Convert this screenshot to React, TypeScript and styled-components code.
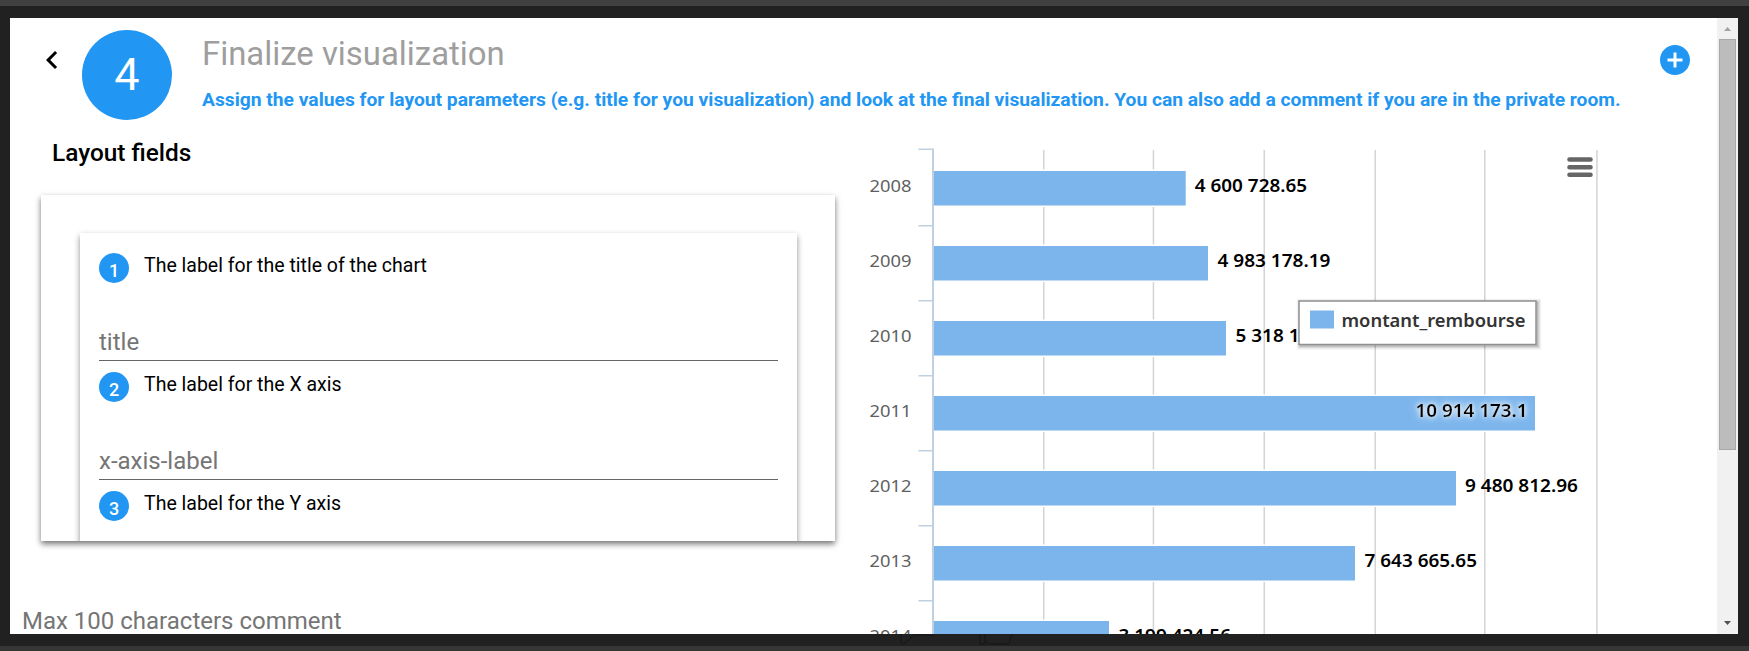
import React from 'react';
import styled, { createGlobalStyle } from 'styled-components';

const BLUE = '#2196f3';
const CHART_FONT = "'Noto Sans', 'Open Sans', sans-serif";

const GlobalStyle = createGlobalStyle`
  *, *::before, *::after { box-sizing: border-box; }
  html, body { margin: 0; height: 100%; overflow: hidden; background: #212121; }
  body { font-family: Roboto, sans-serif; color: #000; }
  h1, h2, p { margin: 0; }
`;

const Backdrop = styled.div`
  height: 651px;
  display: flex;
  flex-direction: column;
  background: #212121;
`;

const Strip = styled.div<{ $height: number; $color: string }>`
  flex: none;
  height: ${(p) => p.$height}px;
  background: ${(p) => p.$color};
`;

const Dialog = styled.main`
  flex: none;
  display: flex;
  width: 1728px;
  height: 616px;
  margin: 12px 0 0 10px;
  background: #fff;
  overflow: hidden;
`;

const Content = styled.div`
  width: 1707px;
  height: 616px;
  overflow: hidden;
`;

const Header = styled.header`
  display: flex;
  align-items: flex-start;
  height: 114px;
  padding: 12px 24px 0 24px;
`;

const IconButton = styled.button`
  flex: none;
  width: 36px;
  height: 36px;
  margin: 12px 0 0;
  padding: 0;
  border: 0;
  background: none;
  color: inherit;
  svg { display: block; }
`;

const AddButton = styled(IconButton)`
  margin-left: auto;
  color: ${BLUE};
`;

const StepCircle = styled.div`
  flex: none;
  display: flex;
  align-items: center;
  justify-content: center;
  width: 90px;
  height: 90px;
  margin-left: 12px;
  border-radius: 50%;
  background: ${BLUE};
  color: #fff;
  font-size: 45px;
  line-height: 90px;
`;

const Heading = styled.div`
  padding-left: 30px;
  white-space: nowrap;
`;

const Title = styled.h1`
  color: #9e9e9e;
  font-size: 32.9px;
  font-weight: 400;
  line-height: 48px;
`;

const Subtitle = styled.p`
  margin-top: 10px;
  color: ${BLUE};
  font-size: 19.24px;
  font-weight: 700;
  line-height: 24px;
`;

const Columns = styled.div`
  display: flex;
  height: 502px;
`;

const FormColumn = styled.section`
  width: 850px;
  padding-left: 12px;
`;

const SectionTitle = styled.h2`
  padding: 6px 0 0 30px;
  font-size: 24.4px;
  font-weight: 500;
  line-height: 30px;
`;

const FieldsCard = styled.div`
  width: 794px;
  height: 346px;
  margin: 27px 0 0 19px;
  padding: 38px 38px 0 39px;
  background: #fff;
  box-shadow: 0 3px 6px rgba(0, 0, 0, 0.55);
`;

const CardClip = styled.div`
  height: 308px;
  margin: -8px -8px 0;
  padding: 8px 8px 0;
  box-sizing: content-box;
  overflow: hidden;
`;

const InnerCard = styled.div`
  height: 420px;
  padding: 20px 19px 0;
  background: #fff;
  box-shadow: 0 3px 6px rgba(0, 0, 0, 0.45);
`;

const Field = styled.div`
  height: 119px;
`;

const FieldLabel = styled.div`
  display: flex;
  align-items: flex-start;
  height: 70px;
  font-size: 19.5px;
  line-height: 25px;
`;

const Badge = styled.span`
  display: flex;
  justify-content: center;
  width: 30px;
  height: 30px;
  margin-right: 15px;
  border-radius: 50%;
  background: ${BLUE};
  color: #fff;
  font-size: 18px;
  font-weight: 500;
  line-height: 36px;
`;

const InputLine = styled.div`
  height: 38px;
  border-bottom: 1px solid #666;
`;

const Input = styled.input`
  display: block;
  width: 100%;
  height: 37px;
  padding: 1px 0 0;
  border: 0;
  outline: 0;
  background: none;
  font: 400 24px/36px Roboto, sans-serif;
  &::placeholder { color: #757575; opacity: 1; }
`;

const Comment = styled.div`
  margin-top: 62px;
  color: #757575;
  font-size: 24px;
  line-height: 36px;
`;

const Chart = styled.svg`
  flex: none;
  display: block;
  width: 857px;
  height: 502px;
  overflow: hidden;
`;

const Scrollbar = styled.div`
  display: flex;
  flex-direction: column;
  align-items: center;
  justify-content: space-between;
  width: 21px;
  height: 616px;
  background: #f1f1f1;
`;

const Thumb = styled.div`
  width: 17px;
  height: 411px;
  margin-bottom: auto;
  border: 1px solid #a8a8a8;
  background: #bcbcbc;
`;

const Arrow = styled.svg`
  flex: none;
  display: block;
  width: 21px;
  height: 21px;
`;

const Footer = styled.svg`
  flex: none;
  display: block;
  width: 1749px;
  height: 12px;
`;

const fields = [
  { label: 'The label for the title of the chart', name: 'title' },
  { label: 'The label for the X axis', name: 'x-axis-label' },
  { label: 'The label for the Y axis', name: 'y-axis-label' },
];

/* end: right edge of the bar; x and width: extent of the value text */
const bars = [
  { year: '2008', value: '4 600 728.65', end: 1185.7, x: 1194.8, width: 112.3 },
  { year: '2009', value: '4 983 178.19', end: 1208, x: 1217.5, width: 113 },
  { year: '2010', value: '5 318 174.42', end: 1226, x: 1235.5, width: 112.5 },
  { year: '2011', value: '10 914 173.1', end: 1535, x: 1415.5, width: 112, inside: true },
  { year: '2012', value: '9 480 812.96', end: 1456, x: 1465, width: 113 },
  { year: '2013', value: '7 643 665.65', end: 1355, x: 1364.5, width: 112.5 },
  { year: '2014', value: '3 199 424.56', end: 1109, x: 1118.5, width: 112.5 },
];

const gridLines = [1043, 1152.7, 1263.5, 1374.5, 1484, 1596.2];

function BarChart() {
  return (
    <Chart viewBox="860 132 857 502" fontFamily={CHART_FONT}>
      {gridLines.map((x) => (
        <rect key={x} x={x} y={150} width={1.5} height={500} fill="#d4d4d4" />
      ))}
      {bars.map((b, i) => {
        const y = 171 + i * 75;
        return (
          <g key={b.year}>
            <rect x={933} y={y - 1.5} width={b.end - 931.5} height={37.5} fill="#fff" />
            <rect x={934} y={y} width={b.end - 934} height={34} fill="#7cb5ec" />
            <rect x={934} y={y + 34} width={b.end - 934} height={1} fill="#bddaf5" />
            <rect
              x={918.5}
              y={i === 0 ? 148.5 : y - 21}
              width={14}
              height={1.5}
              fill="#c0d0e0"
            />
            <text
              x={869.5}
              y={y + 21.4}
              fontSize={17}
              fill="#606060"
              textLength={42}
              lengthAdjust="spacingAndGlyphs"
            >
              {b.year}
            </text>
          </g>
        );
      })}
      <rect x={932} y={148.5} width={2} height={500} fill="#c0d0e0" />
      {bars.map((b, i) => (
        <text
          key={b.year}
          x={b.x}
          y={192.4 + i * 75}
          fontSize={17}
          fontWeight={600}
          fill="#000"
          textLength={b.width}
          lengthAdjust="spacingAndGlyphs"
          filter={b.inside ? 'url(#halo)' : undefined}
        >
          {b.value}
        </text>
      ))}
      <defs>
        <filter id="halo" x="-10%" y="-50%" width="120%" height="200%">
          <feDropShadow dx="0" dy="0" stdDeviation="4" floodColor="#fff" result="wide" />
          <feDropShadow in="SourceGraphic" dx="0" dy="0" stdDeviation="2.4" floodColor="#fff" result="tight" />
          <feMerge>
            <feMergeNode in="wide" />
            <feMergeNode in="tight" />
          </feMerge>
        </filter>
      </defs>
      <g fill="none" stroke="#000">
        <rect x={1300.5} y={302.5} width={237} height={43.5} strokeOpacity={0.05} strokeWidth={7.5} />
        <rect x={1300.5} y={302.5} width={237} height={43.5} strokeOpacity={0.1} strokeWidth={4.5} />
        <rect x={1300.5} y={302.5} width={237} height={43.5} strokeOpacity={0.15} strokeWidth={1.5} />
      </g>
      <rect x={1299} y={301} width={237} height={43.5} fill="#fff" stroke="#909090" strokeWidth={1.5} />
      <rect x={1310} y={311} width={24} height={17} fill="#7cb5ec" />
      <path d="M1310 310.5h24M1310 328.5h24" stroke="#bddaf5" />
      <text
        x={1341.5}
        y={327}
        fontSize={18}
        fontWeight={600}
        fill="#333"
        textLength={184}
        lengthAdjust="spacingAndGlyphs"
      >
        montant_rembourse
      </text>
      <path
        d="M1569.5 159.5h21M1569.5 167.2h21M1569.5 174.7h21"
        stroke="#666"
        strokeWidth={4.6}
        strokeLinecap="round"
      />
    </Chart>
  );
}

export default function App() {
  return (
    <Backdrop>
      <GlobalStyle />
      <Strip $height={6} $color="#404040" />
      <Dialog>
        <Content>
          <Header>
            <IconButton aria-label="Back">
              <svg width="36" height="36" viewBox="0 0 24 24" fill="currentColor">
                <path d="M15.41 7.41 14 6l-6 6 6 6 1.41-1.41L10.83 12z" />
              </svg>
            </IconButton>
            <StepCircle>4</StepCircle>
            <Heading>
              <Title>Finalize visualization</Title>
              <Subtitle>
                Assign the values for layout parameters (e.g. title for you visualization) and look at
                the final visualization. You can also add a comment if you are in the private room.
              </Subtitle>
            </Heading>
            <AddButton aria-label="Add">
              <svg width="36" height="36" viewBox="0 0 24 24" fill="currentColor">
                <path d="M12 2C6.48 2 2 6.48 2 12s4.48 10 10 10 10-4.48 10-10S17.52 2 12 2zm5 11h-4v4h-2v-4H7v-2h4V7h2v4h4v2z" />
              </svg>
            </AddButton>
          </Header>
          <Columns>
            <FormColumn>
              <SectionTitle>Layout fields</SectionTitle>
              <FieldsCard>
                <CardClip>
                  <InnerCard>
                    {fields.map((f, i) => (
                      <Field key={f.name}>
                        <FieldLabel>
                          <Badge>{i + 1}</Badge>
                          {f.label}
                        </FieldLabel>
                        <InputLine>
                          <Input placeholder={f.name} />
                        </InputLine>
                      </Field>
                    ))}
                  </InnerCard>
                </CardClip>
              </FieldsCard>
              <Comment>Max 100 characters comment</Comment>
            </FormColumn>
            <BarChart />
          </Columns>
        </Content>
        <Scrollbar>
          <Arrow viewBox="0 0 21 21">
            <path d="M7 13h7l-3.5-4z" fill="#a3a3a3" />
          </Arrow>
          <Thumb />
          <Arrow viewBox="0 0 21 21">
            <path d="M7 8h7l-3.5 4z" fill="#505050" />
          </Arrow>
        </Scrollbar>
      </Dialog>
      <Footer viewBox="0 0 1749 12" fill="none" stroke="#191919" strokeWidth="1.5">
        <path d="M901 0v9q1 2 4 0l9-8h20" />
        <path d="M980 0v10h5V0M986 8q3 2 6 2h15q3 0 3-4l2-6" />
      </Footer>
      <Strip $height={5} $color="#363636" />
    </Backdrop>
  );
}
